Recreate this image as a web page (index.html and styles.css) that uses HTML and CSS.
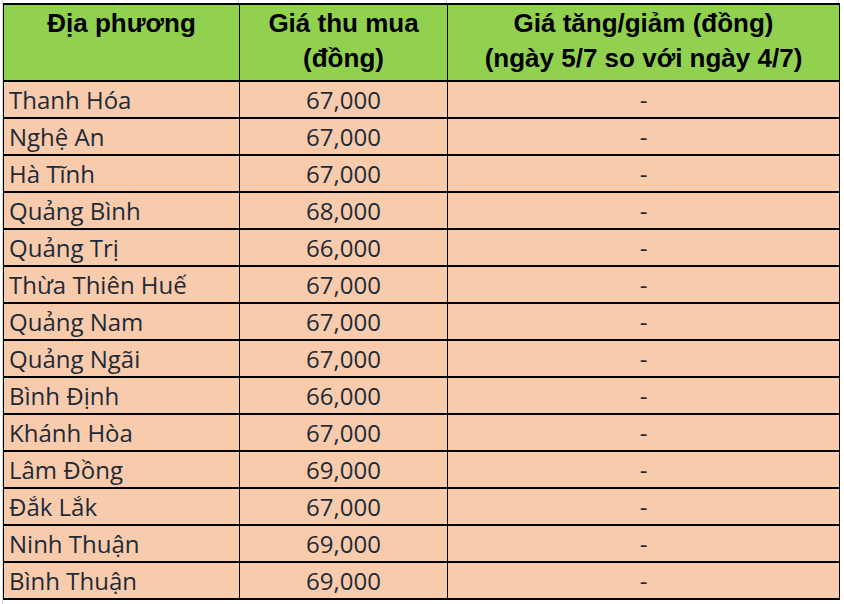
FILE: index.html
```html
<!DOCTYPE html>
<html lang="vi">
<head>
<meta charset="utf-8">
<title>Giá thu mua</title>
<link rel="stylesheet" href="styles.css">
</head>
<body>
<div class="sheet">
  <div class="gridtop">
    <div class="gc c1"></div>
    <div class="gc c2"></div>
    <div class="gc c3"></div>
  </div>
  <table class="price">
    <colgroup>
      <col class="w1"><col class="w2"><col class="w3">
    </colgroup>
    <thead>
      <tr>
        <th>Địa phương</th>
        <th>Giá thu mua<br>(đồng)</th>
        <th>Giá tăng/giảm (đồng)<br>(ngày 5/7 so với ngày 4/7)</th>
      </tr>
    </thead>
    <tbody>
      <tr><td class="name">Thanh Hóa</td><td class="num">67,000</td><td class="chg">-</td></tr>
      <tr><td class="name">Nghệ An</td><td class="num">67,000</td><td class="chg">-</td></tr>
      <tr><td class="name">Hà Tĩnh</td><td class="num">67,000</td><td class="chg">-</td></tr>
      <tr><td class="name">Quảng Bình</td><td class="num">68,000</td><td class="chg">-</td></tr>
      <tr><td class="name">Quảng Trị</td><td class="num">66,000</td><td class="chg">-</td></tr>
      <tr><td class="name">Thừa Thiên Huế</td><td class="num">67,000</td><td class="chg">-</td></tr>
      <tr><td class="name">Quảng Nam</td><td class="num">67,000</td><td class="chg">-</td></tr>
      <tr><td class="name">Quảng Ngãi</td><td class="num">67,000</td><td class="chg">-</td></tr>
      <tr><td class="name">Bình Định</td><td class="num">66,000</td><td class="chg">-</td></tr>
      <tr><td class="name">Khánh Hòa</td><td class="num">67,000</td><td class="chg">-</td></tr>
      <tr><td class="name">Lâm Đồng</td><td class="num">69,000</td><td class="chg">-</td></tr>
      <tr><td class="name">Đắk Lắk</td><td class="num">67,000</td><td class="chg">-</td></tr>
      <tr><td class="name">Ninh Thuận</td><td class="num">69,000</td><td class="chg">-</td></tr>
      <tr><td class="name">Bình Thuận</td><td class="num">69,000</td><td class="chg">-</td></tr>
    </tbody>
  </table>
</div>
</body>
</html>
```
FILE: styles.css
```css
html, body {
  margin: 0;
  padding: 0;
  background: #ffffff;
}
.sheet {
  margin-left: 2px;
  border-left: 1px solid #d4d4d4;
  width: 842px;
  height: 604px;
  box-sizing: border-box;
}
.gridtop {
  display: flex;
  height: 3px;
}
.gc {
  height: 3px;
  border-right: 1px solid #dadada;
  box-sizing: border-box;
}
.gc.c1 { width: 236px; }
.gc.c2 { width: 208px; }
.gc.c3 { width: 392px; }
.price {
  border-collapse: collapse;
  table-layout: fixed;
  width: 836px;
}
.w1 { width: 236px; }
.w2 { width: 208px; }
.w3 { width: 392px; }
.price th {
  background: #92d050;
  font-family: "Liberation Sans", Arial, sans-serif;
  font-weight: bold;
  font-size: 26px;
  line-height: 35px;
  color: #000;
  text-align: center;
  vertical-align: top;
  height: 77px;
  box-sizing: border-box;
  padding: 1px 0 0 0;
  border: 1px solid #000;
  border-top-width: 2px;
  border-bottom-width: 2px;
}
.price td {
  background: #f8cbad;
  font-family: "Open Sans", "Noto Sans", sans-serif;
  font-size: 24px;
  color: #1e2a36;
  height: 37px;
  box-sizing: border-box;
  padding: 0;
  border-left: 1px solid #000;
  border-right: 1px solid #000;
  border-bottom: 2px solid #000;
  vertical-align: middle;
  white-space: nowrap;
  line-height: 35px;
}
.price td.name {
  padding-left: 5px;
  text-align: left;
}
.price td.num,
.price td.chg {
  text-align: center;
}
```
